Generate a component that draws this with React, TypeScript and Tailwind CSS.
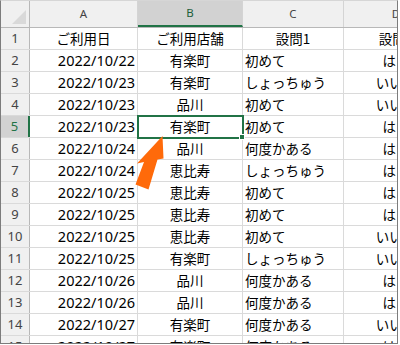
const rows: [string, string, string, string][] = [
  ['2022/10/22', '有楽町', '初めて', 'はい'],
  ['2022/10/23', '有楽町', 'しょっちゅう', 'いいえ'],
  ['2022/10/23', '品川', '初めて', 'いいえ'],
  ['2022/10/23', '有楽町', '初めて', 'はい'],
  ['2022/10/24', '品川', '何度かある', 'はい'],
  ['2022/10/24', '恵比寿', 'しょっちゅう', 'はい'],
  ['2022/10/25', '恵比寿', '初めて', 'はい'],
  ['2022/10/25', '恵比寿', '初めて', 'はい'],
  ['2022/10/25', '恵比寿', '初めて', 'いいえ'],
  ['2022/10/25', '有楽町', 'しょっちゅう', 'いいえ'],
  ['2022/10/26', '品川', '何度かある', 'はい'],
  ['2022/10/26', '品川', '何度かある', 'はい'],
  ['2022/10/27', '有楽町', '何度かある', 'いいえ'],
  ['2022/10/27', '有楽町', '何度かある', 'はい'],
];

const jp = "font-['Noto_Sans_CJK_JP',sans-serif] text-[13.5px]";
const latin = "font-['Noto_Sans','Noto_Sans_CJK_JP',sans-serif]";
const cell = 'h-full shrink-0 flex items-center border-r border-[#dadada] overflow-hidden whitespace-nowrap';

function ColHeader({ label, width, active }: { label: string; width: string; active?: boolean }) {
  return (
    <div
      className={`${width} h-full shrink-0 flex items-center justify-center border-r border-[#d4d4d4] ${latin} text-[11.5px] ${
        active ? 'bg-[#d2d2d2] text-[#1e5e3a] border-b-2 border-b-[#217346]' : 'text-[#444]'
      }`}
    >
      {label}
    </div>
  );
}

function RowHead({ n }: { n: number }) {
  const active = n === 5;
  return (
    <div
      className={`w-[29px] h-full shrink-0 flex items-center justify-center ${latin} text-[13px] ${
        active
          ? 'bg-[#d2d2d2] text-[#217346] border-r-2 border-[#217346]'
          : 'bg-[#f0f0f0] text-[#444] border-r border-[#b8b8b8]'
      }`}
    >
      {n}
    </div>
  );
}

// title row: every heading is centred
function TitleRow({ titles }: { titles: [string, string, string, string] }) {
  return (
    <div className="flex h-[22px] shrink-0 border-b border-[#dadada]">
      <RowHead n={1} />
      <div className={`${cell} w-[108px] justify-center ${jp} text-black`}>{titles[0]}</div>
      <div className={`${cell} w-[105px] justify-center ${jp} text-black`}>{titles[1]}</div>
      <div className={`${cell} w-[101px] justify-center ${jp} text-black`}>{titles[2]}</div>
      <div className={`${cell} w-[105px] justify-center ${jp} text-black`}>{titles[3]}</div>
    </div>
  );
}

function Row({ n, data }: { n: number; data: [string, string, string, string] }) {
  return (
    <div className="flex h-[22px] shrink-0 border-b border-[#dadada]">
      <RowHead n={n} />
      <div className={`${cell} w-[108px] justify-end pr-[2px] ${latin} text-[14.5px] text-black`}>{data[0]}</div>
      <div className={`${cell} w-[105px] justify-center ${jp} text-black`}>{data[1]}</div>
      <div className={`${cell} w-[101px] justify-start pl-[2px] ${jp} text-black`}>{data[2]}</div>
      <div className={`${cell} w-[105px] justify-center ${jp} text-black`}>{data[3]}</div>
    </div>
  );
}

export default function App() {
  return (
    <div className="w-[400px] h-[345px] bg-white">
      <div className="relative w-[398px] h-[344px] overflow-hidden border border-[#7c7c7c] border-t-[#d6d6d6] bg-white">
        <div className="flex flex-col">
          {/* column letters */}
          <div className="flex h-[27px] shrink-0 bg-[#f0f0f0] border-b border-[#b8b8b8]">
            <div className="w-[29px] h-full shrink-0 border-r border-[#b8b8b8] flex items-end justify-end p-[3px]">
              <svg width="14" height="14" viewBox="0 0 14 14">
                <polygon points="0,14 14,14 14,0" fill="#d9d9d9" />
              </svg>
            </div>
            <ColHeader label="A" width="w-[108px]" />
            <ColHeader label="B" width="w-[105px]" active />
            <ColHeader label="C" width="w-[101px]" />
            <ColHeader label="D" width="w-[105px]" />
          </div>

          <TitleRow titles={['ご利用日', 'ご利用店舗', '設問1', '設問2']} />
          {rows.map((r, i) => (
            <Row key={i} n={i + 2} data={r} />
          ))}
        </div>

        {/* active cell B5 */}
        <div className="absolute left-[136px] top-[114px] w-[107px] h-[24px] border-2 border-[#217346] pointer-events-none" />
        <div className="absolute left-[238px] top-[133px] w-[6px] h-[6px] bg-[#217346] border border-white pointer-events-none" />

        {/* callout arrow */}
        <svg className="absolute left-0 top-0 pointer-events-none" width="398" height="344" viewBox="1 1 398 344">
          <polygon
            points="162.5,136 163.5,158.5 157.5,159.5 148.5,189.5 135.5,184.5 144,162 137,163.5"
            fill="#ff6a0a"
          />
        </svg>
      </div>
    </div>
  );
}
